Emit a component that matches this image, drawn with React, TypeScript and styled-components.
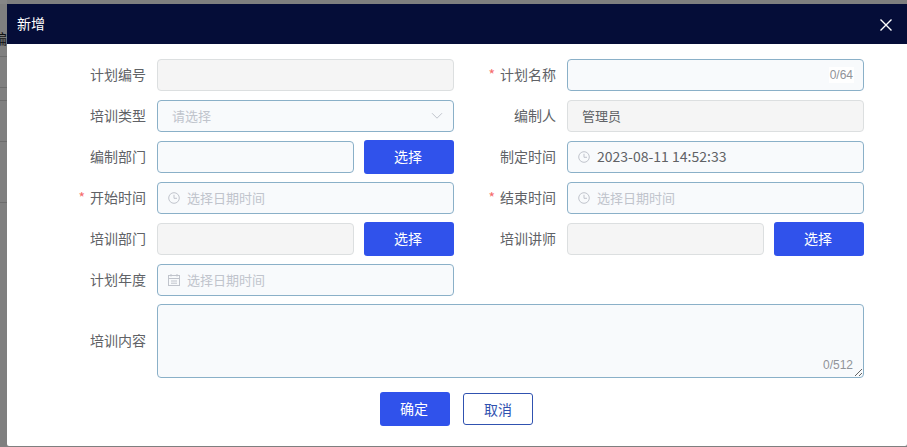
import React from 'react';
import styled, { createGlobalStyle } from 'styled-components';

const GlobalStyle = createGlobalStyle`
  html, body {
    margin: 0;
    padding: 0;
    height: 100%;
    overflow: hidden;
    background: #7f7f7f;
    font-family: "Noto Sans CJK SC", "Noto Sans", sans-serif;
  }
  * {
    box-sizing: border-box;
  }
`;

const Page = styled.div`
  position: relative;
  width: 907px;
  height: 447px;
  overflow: hidden;
  background: #7f7f7f;
`;

const BackRows = styled.div`
  width: 7px;
  padding-top: 4px;
  border-top: 4px solid #868686;
  overflow: hidden;
`;

const BackRow = styled.div<{ $height: number }>`
  height: ${p => p.$height}px;
  display: flex;
  justify-content: flex-end;
  align-items: flex-end;
  padding-bottom: 8px;
  border-bottom: 1px solid #6c6c6c;
  color: #111;
  font-size: 14px;
  white-space: nowrap;
`;

const Dialog = styled.div`
  position: absolute;
  left: 7px;
  top: 4px;
  width: 900px;
  height: 442px;
  background: #fff;
  border-radius: 0 0 2px 2px;
`;

const Header = styled.div`
  height: 40px;
  display: flex;
  align-items: center;
  justify-content: space-between;
  padding: 0 15px 0 10px;
  background: #050d38;
  color: #fff;
  font-size: 14px;
`;

const Title = styled.span`
  margin-top: -2px;
`;

const CloseButton = styled.button`
  display: flex;
  margin-top: 2px;
  padding: 0;
  border: 0;
  background: none;
  color: #fff;
`;

const Form = styled.form`
  display: grid;
  grid-template-columns: 397px 397px;
  column-gap: 13px;
  row-gap: 9px;
  padding: 15px 0 0 50px;
`;

const Field = styled.div<{ $wide?: boolean }>`
  display: grid;
  grid-template-columns: 90px 1fr;
  column-gap: 10px;
  align-items: center;
  ${p => p.$wide && 'grid-column: 1 / -1; margin-top: -1px;'}
`;

const Label = styled.label<{ $required?: boolean }>`
  padding-right: 1px;
  padding-bottom: 2px;
  text-align: right;
  color: #606266;
  font-size: 14px;
  line-height: 30px;
  white-space: nowrap;
  ${p => p.$required && `
    &::before {
      content: "*";
      color: #f56c6c;
      margin-right: 5px;
    }
  `}
`;

const Control = styled.div`
  position: relative;
  display: flex;
  align-items: center;
  gap: 10px;
  height: 32px;
`;

const TextInput = styled.input<{ $icon?: boolean; $large?: boolean }>`
  flex: 1;
  min-width: 0;
  width: 100%;
  height: 32px;
  padding: 0 15px 2px ${p => (p.$icon ? 29 : 14)}px;
  border: 1px solid #8ab0c8;
  border-radius: 4px;
  outline: none;
  background: #f8fafc;
  color: #606266;
  font-family: inherit;
  font-size: ${p => (p.$large ? 14 : 13)}px;

  &::placeholder {
    color: #c0c4cc;
    opacity: 1;
  }

  &:disabled {
    background: #f5f5f5;
    border-color: #dcdfe0;
    color: #606266;
    -webkit-text-fill-color: #606266;
  }
`;

const IconSlot = styled.span`
  position: absolute;
  left: 11px;
  top: 10px;
  display: flex;
  color: #c0c4cc;
`;

const ArrowSlot = styled.span`
  position: absolute;
  right: 11px;
  top: 12px;
  display: flex;
  color: #c0c4cc;
`;

const Counter = styled.span`
  position: absolute;
  right: 10px;
  top: 8px;
  padding: 0 1px;
  background: #fff;
  color: #909399;
  font-family: "Liberation Sans", Arial, sans-serif;
  font-size: 12px;
  line-height: 16px;
`;

const PickButton = styled.button`
  flex: none;
  width: 90px;
  height: 34px;
  padding: 0 2px 2px 0;
  border: 0;
  border-radius: 3px;
  background: #3052eb;
  color: #fff;
  font-family: inherit;
  font-size: 14px;
`;

const AreaControl = styled.div`
  position: relative;
  display: flex;
  height: 74px;
`;

const TextArea = styled.textarea`
  width: 100%;
  height: 74px;
  padding: 5px 15px;
  border: 1px solid #8ab0c8;
  border-radius: 4px;
  outline: none;
  background: #f8fafc;
  font-family: inherit;
  font-size: 14px;
  resize: both;
`;

const AreaCounter = styled(Counter)`
  top: auto;
  bottom: 5px;
  background: none;
`;

const Footer = styled.div`
  display: flex;
  align-items: center;
  justify-content: center;
  gap: 13px;
  margin-top: 14px;
  padding-right: 1px;
`;

const OkButton = styled.button`
  width: 70px;
  height: 34px;
  padding: 0 2px 2px 0;
  border: 0;
  border-radius: 3px;
  background: #3052eb;
  color: #fff;
  font-family: inherit;
  font-size: 14px;
`;

const CancelButton = styled.button`
  width: 70px;
  height: 32px;
  padding: 0 0 1px;
  border: 1px solid #3052b0;
  border-radius: 3px;
  background: #fff;
  color: #3052b0;
  font-family: inherit;
  font-size: 14px;
`;

const ClockIcon = () => (
  <svg width="12" height="12" viewBox="0 0 12 12" fill="none" stroke="currentColor" strokeWidth="1">
    <circle cx="6" cy="6" r="5.3" />
    <path d="M6 2.8V6.3H9" />
  </svg>
);

const CalendarIcon = () => (
  <svg width="12" height="12" viewBox="0 0 12 12" fill="none" stroke="currentColor" strokeWidth="1">
    <rect x="0.5" y="1.5" width="11" height="10" />
    <path d="M0.5 4.5H11.5M3 0V2.5M9 0V2.5M3 7H9M3 9.2H9" />
  </svg>
);

const ChevronIcon = () => (
  <svg width="12" height="8" viewBox="0 0 12 8" fill="none" stroke="currentColor" strokeWidth="1">
    <path d="M1 1.2L6 6.2L11 1.2" />
  </svg>
);

const App: React.FC = () => {
  return (
    <Page>
      <GlobalStyle />
      <BackRows>
        <BackRow $height={49}>编</BackRow>
        <BackRow $height={31} />
        <BackRow $height={13} />
        <BackRow $height={41} />
        <BackRow $height={61} />
      </BackRows>
      <Dialog>
        <Header>
          <Title>新增</Title>
          <CloseButton type="button" aria-label="关闭">
            <svg width="12" height="12" viewBox="0 0 12 12" fill="none" stroke="currentColor" strokeWidth="1.4">
              <path d="M0.5 0.5L11.5 11.5M11.5 0.5L0.5 11.5" />
            </svg>
          </CloseButton>
        </Header>
        <Form>
          <Field>
            <Label>计划编号</Label>
            <Control><TextInput disabled /></Control>
          </Field>
          <Field>
            <Label $required>计划名称</Label>
            <Control>
              <TextInput />
              <Counter>0/64</Counter>
            </Control>
          </Field>
          <Field>
            <Label>培训类型</Label>
            <Control>
              <TextInput placeholder="请选择" readOnly />
              <ArrowSlot><ChevronIcon /></ArrowSlot>
            </Control>
          </Field>
          <Field>
            <Label>编制人</Label>
            <Control><TextInput disabled value="管理员" /></Control>
          </Field>
          <Field>
            <Label>编制部门</Label>
            <Control>
              <TextInput />
              <PickButton type="button">选择</PickButton>
            </Control>
          </Field>
          <Field>
            <Label>制定时间</Label>
            <Control>
              <IconSlot><ClockIcon /></IconSlot>
              <TextInput $icon $large value="2023-08-11 14:52:33" readOnly />
            </Control>
          </Field>
          <Field>
            <Label $required>开始时间</Label>
            <Control>
              <IconSlot><ClockIcon /></IconSlot>
              <TextInput $icon placeholder="选择日期时间" />
            </Control>
          </Field>
          <Field>
            <Label $required>结束时间</Label>
            <Control>
              <IconSlot><ClockIcon /></IconSlot>
              <TextInput $icon placeholder="选择日期时间" />
            </Control>
          </Field>
          <Field>
            <Label>培训部门</Label>
            <Control>
              <TextInput disabled />
              <PickButton type="button">选择</PickButton>
            </Control>
          </Field>
          <Field>
            <Label>培训讲师</Label>
            <Control>
              <TextInput disabled />
              <PickButton type="button">选择</PickButton>
            </Control>
          </Field>
          <Field>
            <Label>计划年度</Label>
            <Control>
              <IconSlot><CalendarIcon /></IconSlot>
              <TextInput $icon placeholder="选择日期时间" />
            </Control>
          </Field>
          <Field />
          <Field $wide>
            <Label>培训内容</Label>
            <AreaControl>
              <TextArea />
              <AreaCounter>0/512</AreaCounter>
            </AreaControl>
          </Field>
        </Form>
        <Footer>
          <OkButton type="button">确定</OkButton>
          <CancelButton type="button">取消</CancelButton>
        </Footer>
      </Dialog>
    </Page>
  );
};

export default App;
